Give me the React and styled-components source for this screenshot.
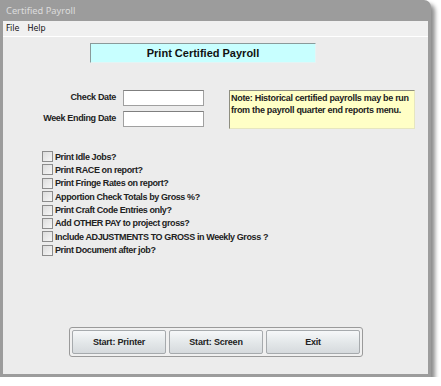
import React, { useState } from 'react'
import styled, { createGlobalStyle } from 'styled-components'

const Global = createGlobalStyle`
  html, body { margin: 0; padding: 0; background: #ffffff; }
  body { font-family: "Liberation Sans", Arial, sans-serif; }
`

const Window = styled.div`
  width: 431px;
  height: 377px;
  display: flex;
  flex-direction: column;
  background: #9c9c9c;
  border-top-right-radius: 7px;
  box-shadow: 4px 4px 4px rgba(0,0,0,0.45);
  box-sizing: border-box;
  padding: 0 3px 3px 3px;
`

const TitleBar = styled.div`
  height: 21px;
  display: flex;
  align-items: center;
  padding-left: 3px;
  color: #dcdcdc;
  font-family: "Noto Sans", "DejaVu Sans", sans-serif;
  font-size: 9.3px;
`

const MenuBar = styled.div`
  height: 15px;
  display: flex;
  align-items: center;
  gap: 8px;
  padding-left: 3px;
  background: #f0f0f0;
  border-bottom: 1px solid #ffffff;
  font-family: "DejaVu Sans", sans-serif;
  font-size: 8px;
  color: #111;
`

const Content = styled.div`
  flex: 1;
  background: #ececec;
  padding-top: 6px;
  display: flex;
  flex-direction: column;
`

const HeaderBox = styled.div`
  margin-left: 87px;
  width: 226px;
  height: 20px;
  box-sizing: border-box;
  background: #c8ffff;
  border: 1px solid #e4f4f4;
  border-top-color: #8a9a9a;
  border-left-color: #8a9a9a;
  display: flex;
  align-items: center;
  justify-content: center;
  font-weight: bold;
  font-size: 11px;
  color: #111;
`

const FormRow = styled.div`
  margin-top: 27px;
  display: flex;
  align-items: flex-start;
`

const DateGrid = styled.div`
  width: 200px;
  display: grid;
  grid-template-columns: 113px 81px;
  column-gap: 7px;
  row-gap: 5px;
  align-items: center;
`

const Label = styled.label`
  text-align: right;
  font-weight: bold;
  font-size: 9px;
  letter-spacing: -0.35px;
  color: #222;
  margin-top: -3px;
`

const DateInput = styled.input`
  height: 16px;
  box-sizing: border-box;
  border: 1px solid #a0a0a0;
  border-top-color: #7f7f7f;
  background: #fff;
  padding: 0 2px;
  font-size: 10px;
  outline: none;
`

const Note = styled.div`
  margin-left: 26px;
  width: 186px;
  height: 39px;
  box-sizing: border-box;
  background: #ffffc6;
  border: 1px solid #e6e6c0;
  border-top-color: #8e8e80;
  border-left-color: #8e8e80;
  padding: 1px 0 1px 1px;
  font-weight: bold;
  font-size: 9px;
  letter-spacing: -0.3px;
  line-height: 12px;
  color: #222;
`

const CheckList = styled.div`
  margin-top: 22px;
  margin-left: 39px;
  display: flex;
  flex-direction: column;
  gap: 2.4px;
`

const CheckRow = styled.label`
  display: flex;
  align-items: center;
  gap: 2px;
  height: 11px;
  font-weight: bold;
  font-size: 9px;
  letter-spacing: -0.4px;
  color: #222;
  cursor: pointer;
`

const Box = styled.span`
  width: 11px;
  height: 11px;
  box-sizing: border-box;
  border: 1px solid #8c8c8c;
  background: linear-gradient(135deg, #dcdcdc, #f6f6f6);
  display: flex;
  align-items: center;
  justify-content: center;
  font-size: 9px;
  line-height: 1;
`

const Spacer = styled.div`
  flex: 1;
`

const ButtonGroup = styled.div`
  align-self: flex-start;
  margin-left: 66px;
  margin-bottom: 17px;
  display: flex;
  gap: 3px;
  padding: 2px;
  border: 1px solid #9a9a9a;
  border-radius: 3px;
  background: #f0f0f0;
`

const Button = styled.button`
  width: 94px;
  height: 24px;
  border: 1px solid #a6aaad;
  border-radius: 2px;
  background: linear-gradient(#f6f8f9, #e4e8ea 50%, #d6dadd);
  font-family: "Liberation Sans", Arial, sans-serif;
  font-weight: bold;
  font-size: 9px;
  letter-spacing: -0.2px;
  color: #222;
  cursor: pointer;
`

const options = [
  'Print Idle Jobs?',
  'Print RACE on report?',
  'Print Fringe Rates on report?',
  'Apportion Check Totals by Gross %?',
  'Print Craft Code Entries only?',
  'Add OTHER PAY to project gross?',
  'Include ADJUSTMENTS TO GROSS in Weekly Gross ?',
  'Print Document after job?',
]

export default function App() {
  const [checked, setChecked] = useState({})
  const toggle = (i) => setChecked({ ...checked, [i]: !checked[i] })

  return (
    <>
      <Global />
      <Window>
        <TitleBar>Certified Payroll</TitleBar>
        <MenuBar>
          <span>File</span>
          <span>Help</span>
        </MenuBar>
        <Content>
          <HeaderBox>Print Certified Payroll</HeaderBox>
          <FormRow>
            <DateGrid>
              <Label>Check Date</Label>
              <DateInput />
              <Label>Week Ending Date</Label>
              <DateInput />
            </DateGrid>
            <Note>
              Note: Historical certified payrolls may be run from the payroll quarter end reports menu.
            </Note>
          </FormRow>
          <CheckList>
            {options.map((o, i) => (
              <CheckRow key={o} onClick={() => toggle(i)}>
                <Box>{checked[i] ? '✓' : ''}</Box>
                {o}
              </CheckRow>
            ))}
          </CheckList>
          <Spacer />
          <ButtonGroup>
            <Button>Start: Printer</Button>
            <Button>Start: Screen</Button>
            <Button>Exit</Button>
          </ButtonGroup>
        </Content>
      </Window>
    </>
  )
}
